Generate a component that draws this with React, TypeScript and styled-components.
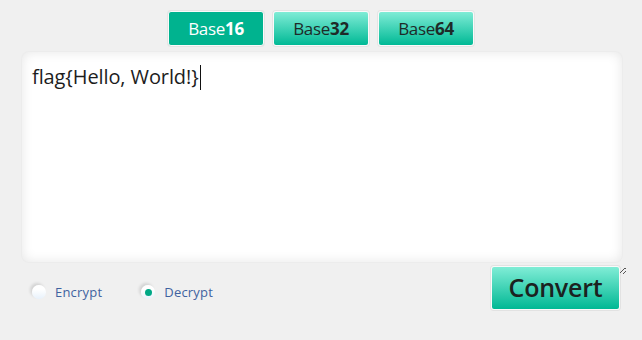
import React, { useState } from 'react';
import styled, { createGlobalStyle } from 'styled-components';

const GlobalStyle = createGlobalStyle`
  html, body {
    margin: 0;
    padding: 0;
    background: #f0f0f0;
    font-family: "Open Sans", "Noto Sans", sans-serif;
  }
`;

const Page = styled.div`
  width: 642px;
  height: 340px;
  display: flex;
  flex-direction: column;
  align-items: center;
  padding-top: 11px;
  box-sizing: border-box;
`;

const Tabs = styled.div`
  display: flex;
  gap: 9px;
`;

interface TabProps {
  active?: boolean;
}

const Tab = styled.button<TabProps>`
  width: 96px;
  height: 35px;
  border: 1px solid #fafafa;
  border-radius: 3px;
  font-family: inherit;
  font-size: 17px;
  letter-spacing: -0.3px;
  cursor: pointer;
  color: ${props => (props.active ? '#ffffff' : '#1e2a28')};
  background: ${props =>
    props.active ? '#00b38f' : 'linear-gradient(to bottom, #7fecd6 0%, #00b995 100%)'};
  box-shadow: 0 0 0 1px #e4e4e4;

  b {
    font-weight: 700;
  }
`;

const Editor = styled.div`
  position: relative;
  width: 600px;
  height: 210px;
  margin-top: 6px;
  margin-left: 2px;
  border-radius: 7px;
  background: #ffffff;
  box-shadow: inset 0 0 12px rgba(0, 0, 0, 0.1), 0 0 0 1px #ececec;

  &::after {
    content: '';
    position: absolute;
    right: -4px;
    bottom: -12px;
    width: 6px;
    height: 6px;
    background: linear-gradient(
      135deg,
      transparent 40%,
      #555 40%,
      #555 50%,
      transparent 50%,
      transparent 70%,
      #555 70%,
      #555 80%,
      transparent 80%
    );
  }
`;

const Input = styled.textarea`
  width: 100%;
  height: 100%;
  box-sizing: border-box;
  border: none;
  outline: none;
  resize: none;
  background: transparent;
`;

const Caret = styled.span`
  display: inline-block;
  width: 1px;
  height: 25px;
  background: #111;
  vertical-align: -6px;
  margin-left: 1px;
`;

const Overlay = styled.div`
  position: absolute;
  left: 10px;
  top: 11px;
  font-size: 20px;
  line-height: 28px;
  color: #1d1d1d;
  letter-spacing: -0.1px;
  pointer-events: none;
`;

const Footer = styled.div`
  width: 600px;
  margin-left: 2px;
  margin-top: 4px;
  display: flex;
  align-items: flex-start;
  justify-content: space-between;
`;

const Modes = styled.div`
  display: flex;
  gap: 39px;
  padding-left: 10px;
  padding-top: 17px;
`;

const Mode = styled.label`
  display: flex;
  align-items: center;
  gap: 9px;
  font-size: 13px;
  letter-spacing: 0.2px;
  color: #3f63a0;
  cursor: pointer;
`;

const Dot = styled.span<TabProps>`
  width: 14px;
  height: 14px;
  border-radius: 50%;
  background: linear-gradient(to bottom, #ffffff 30%, #e7f1fb 100%);
  box-shadow: -2px -2px 3px rgba(0, 0, 0, 0.12);
  display: flex;
  align-items: center;
  justify-content: center;

  &::after {
    content: '';
    width: 7px;
    height: 7px;
    border-radius: 50%;
    background: ${props => (props.active ? '#00a885' : 'transparent')};
  }
`;

const Convert = styled.button`
  width: 129px;
  height: 44px;
  margin-right: 2px;
  border: 1px solid #fafafa;
  border-radius: 3px;
  box-shadow: 0 0 0 1px #e2e2e2;
  background: linear-gradient(to bottom, #80edd6 0%, #00b894 100%);
  font-family: inherit;
  font-size: 25px;
  font-weight: 600;
  letter-spacing: -0.2px;
  color: #1b2220;
  cursor: pointer;
  padding: 0 0 2px;
`;

const App: React.FC = () => {
  const [base, setBase] = useState('16');
  const [mode, setMode] = useState('decrypt');

  return (
    <>
      <GlobalStyle />
      <Page>
        <Tabs>
          {['16', '32', '64'].map(b => (
            <Tab key={b} active={base === b} onClick={() => setBase(b)}>
              Base<b>{b}</b>
            </Tab>
          ))}
        </Tabs>
        <Editor>
          <Input readOnly value="" />
          <Overlay>
            flag{'{'}Hello, World!{'}'}
            <Caret />
          </Overlay>
        </Editor>
        <Footer>
          <Modes>
            <Mode onClick={() => setMode('encrypt')}>
              <Dot active={mode === 'encrypt'} />
              Encrypt
            </Mode>
            <Mode onClick={() => setMode('decrypt')}>
              <Dot active={mode === 'decrypt'} />
              Decrypt
            </Mode>
          </Modes>
          <Convert>Convert</Convert>
        </Footer>
      </Page>
    </>
  );
};

export default App;
